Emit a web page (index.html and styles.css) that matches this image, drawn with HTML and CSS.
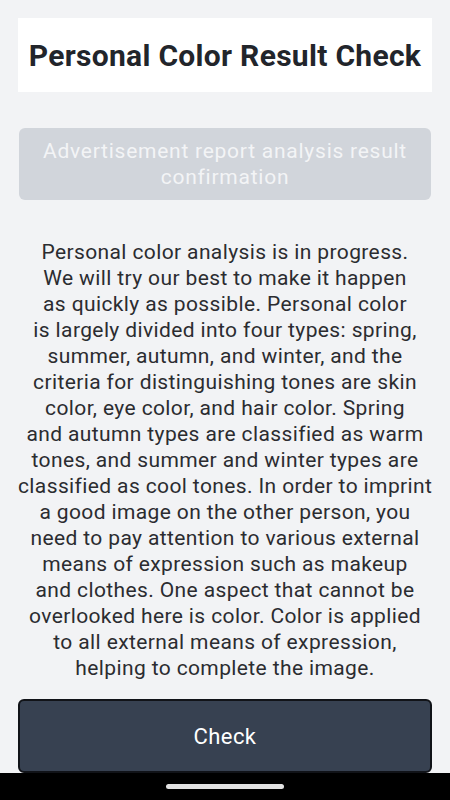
FILE: index.html
```html
<!DOCTYPE html>
<html lang="en">
<head>
<meta charset="utf-8">
<link rel="stylesheet" href="styles.css">
</head>
<body>
<div class="page">
  <header class="title-box"><h1 class="title">Personal Color Result Check</h1></header>
  <button class="ad-btn">Advertisement report analysis result<br>confirmation</button>
  <p class="desc">Personal color analysis is in progress.<br>We will try our best to make it happen<br>as quickly as possible. Personal color<br>is largely divided into four types: spring,<br>summer, autumn, and winter, and the<br>criteria for distinguishing tones are skin<br>color, eye color, and hair color. Spring<br>and autumn types are classified as warm<br>tones, and summer and winter types are<br>classified as cool tones. In order to imprint<br>a good image on the other person, you<br>need to pay attention to various external<br>means of expression such as makeup<br>and clothes. One aspect that cannot be<br>overlooked here is color. Color is applied<br>to all external means of expression,<br>helping to complete the image.</p>
  <button class="check-btn">Check</button>
</div>
<div class="navbar"><span class="pill"></span></div>
</body>
</html>
```
FILE: styles.css
```css
html, body {
  margin: 0;
  padding: 0;
  background: #f2f3f5;
  font-family: Roboto, "Liberation Sans", sans-serif;
}
.page {
  display: flex;
  flex-direction: column;
  padding: 18px 18px 0;
}
.title-box {
  background: #ffffff;
  height: 74px;
  display: flex;
  align-items: center;
  justify-content: center;
}
.title {
  margin: 0;
  font-size: 30px;
  font-weight: 700;
  color: #22252b;
  letter-spacing: 0.3px;
}
.ad-btn {
  margin: 36px 1px 0;
  height: 72px;
  border: none;
  border-radius: 6px;
  background: #d1d5db;
  color: #f3f4f6;
  font-family: inherit;
  font-size: 21px;
  letter-spacing: 0.75px;
  line-height: 26px;
  padding: 10px 8px;
}
.desc {
  margin: 39px 0 0;
  text-align: center;
  white-space: nowrap;
  font-size: 21px;
  letter-spacing: 0.38px;
  line-height: 26px;
  color: #2b2c30;
}
.check-btn {
  margin-top: 18px;
  height: 74px;
  border: 2px solid #111318;
  border-radius: 6px;
  background: #374151;
  color: #ffffff;
  font-family: inherit;
  font-size: 22px;
  letter-spacing: 0.4px;
}
.navbar {
  position: fixed;
  left: 0;
  right: 0;
  bottom: 0;
  height: 27px;
  background: #000000;
  display: flex;
  justify-content: center;
  align-items: center;
}
.pill {
  width: 118px;
  height: 5px;
  border-radius: 3px;
  background: #e2e2e2;
}
```
